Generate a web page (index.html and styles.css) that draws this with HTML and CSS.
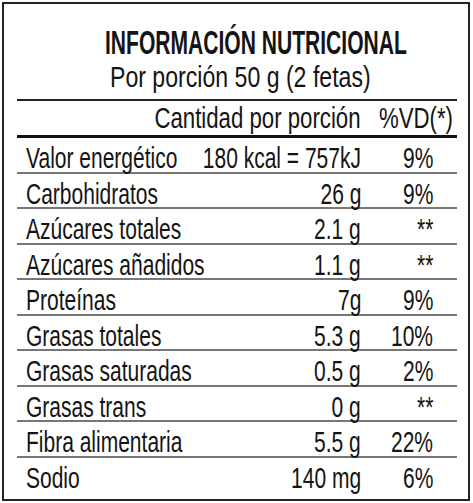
FILE: index.html
```html
<!DOCTYPE html>
<html lang="es">
<head>
<meta charset="utf-8">
<title>Información nutricional</title>
<link rel="stylesheet" href="styles.css">
</head>
<body>
<div class="label">
  <div class="head">
    <div class="title"><span class="sq-t">INFORMACIÓN NUTRICIONAL</span></div>
    <div class="serving"><span class="sq l">Por porción 50 g (2 fetas)</span></div>
  </div>
  <div class="table">
    <div class="thead">
      <span class="sq r">Cantidad por porción</span>
      <span class="sq r">%VD(*)</span>
    </div>
    <div class="row"><span class="sq l">Valor energético</span><span class="sq r">180 kcal = 757kJ</span><span class="sq r">9%</span></div>
    <div class="row"><span class="sq l">Carbohidratos</span><span class="sq r">26 g</span><span class="sq r">9%</span></div>
    <div class="row"><span class="sq l">Azúcares totales</span><span class="sq r">2.1 g</span><span class="sq r">**</span></div>
    <div class="row"><span class="sq l">Azúcares añadidos</span><span class="sq r">1.1 g</span><span class="sq r">**</span></div>
    <div class="row"><span class="sq l">Proteínas</span><span class="sq r">7g</span><span class="sq r">9%</span></div>
    <div class="row"><span class="sq l">Grasas totales</span><span class="sq r">5.3 g</span><span class="sq r">10%</span></div>
    <div class="row"><span class="sq l">Grasas saturadas</span><span class="sq r">0.5 g</span><span class="sq r">2%</span></div>
    <div class="row"><span class="sq l">Grasas trans</span><span class="sq r">0 g</span><span class="sq r">**</span></div>
    <div class="row"><span class="sq l">Fibra alimentaria</span><span class="sq r">5.5 g</span><span class="sq r">22%</span></div>
    <div class="row last"><span class="sq l">Sodio</span><span class="sq r">140 mg</span><span class="sq r">6%</span></div>
  </div>
</div>
</body>
</html>
```
FILE: styles.css
```css
html, body {
  margin: 0;
  padding: 0;
  background: #fff;
}
body {
  font-family: "Liberation Sans", Arial, sans-serif;
  color: #141414;
}
.label {
  box-sizing: border-box;
  margin: 2px 0 0 2px;
  width: 468px;
  height: 499px;
  border: 2px solid #222;
  display: flex;
  flex-direction: column;
  overflow: hidden;
}
.head {
  padding-top: 22px;
}
.title {
  font-weight: bold;
  font-size: 32.3px;
  line-height: 34px;
  white-space: nowrap;
}
.sq-t {
  display: inline-block;
  transform: translateX(101px) scaleX(0.652);
  transform-origin: left center;
}
.serving {
  padding-left: 106px;
  font-size: 30px;
  line-height: 34px;
  white-space: nowrap;
  overflow: hidden;
}
.sq {
  display: inline-block;
  white-space: nowrap;
  transform: scaleX(0.7);
}
.serving .sq { transform: scaleX(0.77); }
.thead .sq { transform: scaleX(0.74); }
.sq.l { transform-origin: left center; justify-self: start; }
.sq.r { transform-origin: right center; justify-self: end; }
.table {
  margin: 5px 11px 0 13px;
  border-top: 2px solid #222;
  font-size: 30px;
}
.thead {
  display: grid;
  grid-template-columns: minmax(0, 1fr) 92px;
  padding: 0 4px 0 0;
  line-height: 34px;
  border-bottom: 3px solid #111;
}
.row {
  display: grid;
  grid-template-columns: minmax(0, 1fr) auto 72px;
  padding: 6px 24px 0 9px;
  line-height: 27.5px;
  border-bottom: 2px solid #777;
}
.row.last {
  border-bottom: none;
}
```
